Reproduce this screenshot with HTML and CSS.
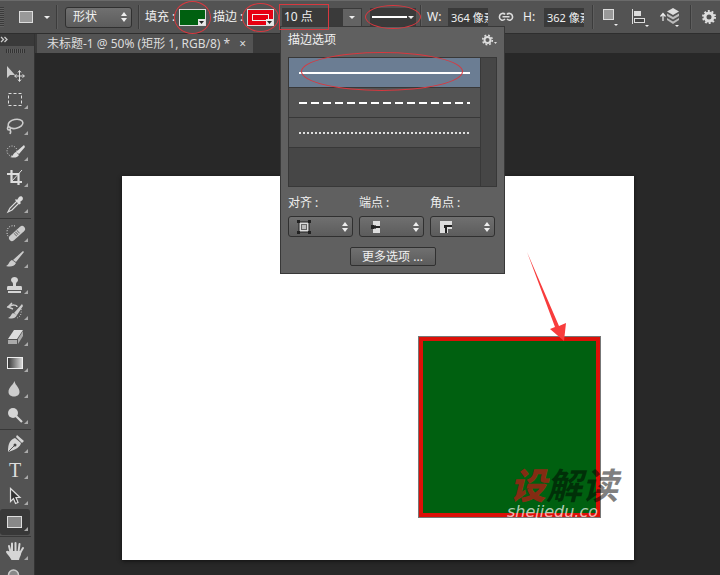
FILE: index.html
```html
<!DOCTYPE html>
<html lang="zh-CN">
    <head>
    <meta charset="utf-8">
    <title>描边选项</title>
    <link rel="stylesheet" href="styles.css">
    </head>

    <body>
        <!-- 顶部选项栏 -->
        <div class="options">
            <span class="grip"></span>
            <button class="preset" aria-label="矩形工具">
                <svg width="32" height="16" viewBox="0 0 32 16"><rect x="1.5" y="2.5" width="13" height="11" fill="#999" stroke="#ddd"/><path d="M26 7h6l-3 3z" fill="#eee"/></svg>
            </button>
            <span class="line"></span>
            <div class="select mode">
                <select aria-label="工具模式"><option>形状</option><option>路径</option><option>像素</option></select>
                <svg width="6" height="10" viewBox="0 0 6 10"><path d="M0 4l3-4 3 4zM0 6h6l-3 4z"/></svg>
            </div>
            <span class="line"></span>
            <label class="name" for="fill">填充 :</label>
            <button class="swatch green" id="fill">
                <svg width="7" height="6" viewBox="0 0 7 6"><path d="M0 0h7v6H0z" fill="#e8e8e8"/><path d="M1 2h5L3.500 5z" fill="#222"/></svg>
                <i class="ring ring-fill"></i>
            </button>
            <label class="name" for="stroke">描边 :</label>
            <button class="swatch red" id="stroke">
                <span class="inner"></span>
                <svg width="7" height="6" viewBox="0 0 7 6"><path d="M0 0h7v6H0z" fill="#e8e8e8"/><path d="M1 2h5L3.500 5z" fill="#222"/></svg>
                <i class="ring ring-stroke"></i>
            </button>
            <div class="size">
                <input type="text" value="10 点" aria-label="描边宽度">
                <button aria-label="选择宽度"><svg width="6" height="3" viewBox="0 0 6 3"><path d="M0 0h6L3 3z" fill="#eee"/></svg></button>
                <i class="ring box"></i>
            </div>
            <button class="type" aria-label="描边类型">
                <svg width="46" height="18" viewBox="0 0 46 18"><path d="M2 8h35v2H2z" fill="#fff"/><path d="M38 8h6l-3 3z" fill="#eee"/></svg>
                <i class="ring ring-type"></i>
            </button>
            <span class="line"></span>
            <label class="axis" for="w">W:</label>
            <input class="num" id="w" type="text" value="364 像素">
            <button class="link" aria-label="链接宽高">
                <svg width="16" height="10" viewBox="0 0 16 10" fill="none" stroke="#ddd" stroke-width="1.600"><path d="M7 2.500C6 1 2 .5 1.500 4.500S5 9 7 7M9 2.500c1-1.500 5-2 5.500 2S11 9 9 7M4.500 4.800h7"/></svg>
            </button>
            <label class="axis" for="h">H:</label>
            <input class="num" id="h" type="text" value="362 像素">
            <span class="line far"></span>
            <div class="actions">
                <button aria-label="路径操作"><svg width="20" height="22" viewBox="0 0 20 22"><rect x="1.500" y="3.500" width="10" height="10" fill="#999" stroke="#ddd"/><path d="M12 18h4l-2 2z" fill="#eee"/></svg></button>
                <button aria-label="对齐方式"><svg width="20" height="22" viewBox="0 0 20 22"><path d="M1 3h1v15H1zM3 5h7v5H3z" fill="#ddd"/><rect x="3.500" y="12.500" width="10" height="4" fill="#444" stroke="#ddd"/><path d="M14 19h4l-2 2z" fill="#eee"/></svg></button>
                <button aria-label="排列方式"><svg width="20" height="22" viewBox="0 0 20 22"><path d="M3 15V8M.500 10.500L3 7.500l2.500 3" fill="none" stroke="#eee" stroke-width="1.200"/><path d="M13 2l6 3.500L13 9 7 5.500z" fill="#ddd"/><path d="M7 7.500l6 3.500 6-3.500v2.500l-6 3.500L7 10zM7 12l6 3.500 6-3.500v2l-6 4-6-4z" fill="#bbb"/><path d="M15 19h4l-2 2z" fill="#eee"/></svg></button>
            </div>
            <span class="line"></span>
            <button class="setting" aria-label="设置"><svg width="14" height="14" viewBox="0 0 14 14"><circle cx="7" cy="7" r="4" fill="none" stroke="#ddd" stroke-width="3"/><circle cx="7" cy="7" r="6" fill="none" stroke="#ddd" stroke-width="2" stroke-dasharray="1.900 1.870"/></svg></button>
        </div>

        <div class="main">
            <!-- 左侧工具栏 -->
            <div class="tools">
                <div class="fold"><svg width="9" height="7" viewBox="0 0 9 7"><path d="M1 1l2.500 2.500L1 6M4.500 1L7 3.500 4.500 6" fill="none" stroke="#ccc" stroke-width="1.300"/></svg></div>
                <div class="handle"><span></span></div>
                <button aria-label="移动"><svg viewBox="0 0 30 26"><path d="M7 5v12l3-3h5z" fill="#ccc"/><path d="M19.500 10v10M15 15h9M18 11.500l1.500-2 1.500 2M18 18.500l1.500 2 1.500-2M16.500 13.500l-2 1.500 2 1.500M22.500 13.500l2 1.500-2 1.500" fill="none" stroke="#ddd"/></svg></button>
                <button class="more" aria-label="选框"><svg viewBox="0 0 30 26"><rect x="8.500" y="6.500" width="13" height="12" fill="none" stroke="#ddd" stroke-dasharray="3 2"/></svg></button>
                <button class="more" aria-label="套索"><svg viewBox="0 0 30 26"><g fill="none" stroke="#ccc" stroke-width="1.600"><ellipse cx="15.500" cy="11" rx="7.500" ry="4.500" transform="rotate(-12 15 11)"/><path d="M9 13c-2 1-2 4 0 4s2-3 0-3M10 17c1 1 1 2 0 4"/></g></svg></button>
                <button class="more" aria-label="快速选择"><svg viewBox="0 0 30 26"><circle cx="12" cy="12" r="5" fill="none" stroke="#ddd" stroke-dasharray="1 1.500"/><path d="M24 6l1 2-6 7-3-2zM16 13l3 3c-2 3-5 3-9 2 3 0 3-4 6-5z" fill="#ddd"/></svg></button>
                <button class="more" aria-label="裁剪"><svg viewBox="0 0 30 26"><path d="M11.500 5v12H22M7 9h11.500v11" fill="none" stroke="#ddd" stroke-width="2.200"/><path d="M12 16L22 5" stroke="#ddd"/></svg></button>
                <button class="more" aria-label="吸管"><svg viewBox="0 0 30 26"><path d="M17 10l2 2-7 7-4 2 2-4z" fill="#555" stroke="#ddd" stroke-width="1.200"/><path d="M15 9l1-1 1 1 2-3c2-2 5 0 3.500 3L20 11l1 1-1.500 1.500z" fill="#ddd"/></svg></button>
                <hr>
                <button class="more" aria-label="修复画笔"><svg viewBox="0 0 30 26"><path d="M15 6c-4-1-8 1-8 6 0 3 1 5 3 6" fill="none" stroke="#ddd" stroke-dasharray="1 1.500"/><path d="M12 18L22 9" stroke="#ccc" stroke-width="6" stroke-linecap="round"/><path d="M15 15l4-4" stroke="#777" stroke-width="4" stroke-dasharray="1 1"/></svg></button>
                <button class="more" aria-label="画笔"><svg viewBox="0 0 30 26"><path d="M23 5l1 1-8 10-3-2zM12 14l4 3c-2 4-6 4-10 3 3-1 3-5 6-6z" fill="#ccc"/></svg></button>
                <button class="more" aria-label="图章"><svg viewBox="0 0 30 26"><path d="M13 12c0-2-2-2-2-4 0-4 7-4 7 0 0 2-2 2-2 4v2h5c1 0 1 1 1 4H7c0-3 0-4 1-4h5zM8 19h13v2H8z" fill="#d5d5d5"/></svg></button>
                <button class="more" aria-label="历史画笔"><svg viewBox="0 0 30 26"><path d="M9 9c3-3 8-2 8 0M12 5L8 9l5 2M9 9H7" fill="none" stroke="#ccc" stroke-width="1.500"/><path d="M22 6l1 2-6 9-3-2zM13 15l4 2c-2 4-5 4-9 3 3-1 3-4 5-5z" fill="#ccc"/><path d="M21 11c1 5-1 8-4 9" fill="none" stroke="#ccc" stroke-dasharray="1 1.500"/></svg></button>
                <button class="more" aria-label="橡皮擦"><svg viewBox="0 0 30 26"><path d="M14 6h9l-6 9H8z" fill="#ddd"/><path d="M8 16h9v4H8zM18 15l5-8v5l-5 8z" fill="#aaa"/></svg></button>
                <button class="more" aria-label="渐变"><svg viewBox="0 0 30 26"><defs><linearGradient id="g"><stop stop-color="#333"/><stop offset="1" stop-color="#ddd"/></linearGradient></defs><rect x="7.500" y="7.500" width="15" height="11" fill="url(#g)" stroke="#eee"/></svg></button>
                <button class="more" aria-label="模糊"><svg viewBox="0 0 30 26"><path d="M14.500 5c1 5 5 6 5 11 0 6-11 6-11 0 0-5 4-6 6-11z" fill="#ccc"/></svg></button>
                <button class="more" aria-label="减淡"><svg viewBox="0 0 30 26"><circle cx="13" cy="11" r="5" fill="#d5d5d5"/><path d="M16 14l6 6" stroke="#d5d5d5" stroke-width="2.200"/></svg></button>
                <hr>
                <button class="more" aria-label="钢笔"><svg viewBox="0 0 30 26"><path d="M17 4l7 6-2 2-6-6zM15 7l6 5c-1 4-4 6-13 9 0-9 2-12 7-14z" fill="#d5d5d5"/><path d="M8.500 20.500l6-6" stroke="#555"/><circle cx="15" cy="14" r="1.500" fill="#444"/></svg></button>
                <button class="more type-tool" aria-label="文字">T</button>
                <button class="more" aria-label="路径选择"><svg viewBox="0 0 30 26"><path d="M10.500 5.500v13l3-3 2 5 2.500-1-2-5h4z" fill="#333" stroke="#ddd" stroke-width="1.200"/></svg></button>
                <button class="more on" aria-label="矩形"><svg viewBox="0 0 30 26"><rect x="7.500" y="7.500" width="14" height="11" fill="#888" stroke="#ddd"/></svg></button>
                <hr>
                <button class="more" aria-label="抓手"><svg viewBox="0 0 30 26"><path d="M12 21c-1-3-5-6-5-7 1-1 2 0 4 2L9 8M12 14L12 5.500M15.500 14V5M18.500 14l1-8M20 15l3-5" fill="none" stroke="#d5d5d5" stroke-width="2" stroke-linecap="round"/><path d="M10 13h11c1 3-1 5-2 9h-7l-3-5z" fill="#d5d5d5"/></svg></button>
                <button class="more" aria-label="缩放"><svg viewBox="0 0 30 26"><circle cx="13.500" cy="11" r="5" fill="#888" stroke="#ccc" stroke-width="1.500"/><path d="M17 15l5 5" stroke="#ccc" stroke-width="2"/></svg></button>
            </div>

            <!-- 文档窗口 -->
            <div class="doc">
                <div class="tabs">
                    <div class="tab"><span>未标题-1 @ 50% (矩形 1, RGB/8) *</span><button aria-label="关闭">×</button></div>
                </div>
                <div class="stage">
                    <div class="paper">
                        <div class="shape"></div>
                        <div class="mark"><p class="cn"><b>设</b>解读</p><p class="en">shejiedu.co</p></div>
                        <svg class="arrow" width="42" height="90" viewBox="0 0 42 90"><path d="M1 0L33 74l7-3-2 18-14-12 5-2z" fill="#f83c3c"/></svg>
                    </div>
                </div>
            </div>
        </div>

        <!-- 描边选项面板 -->
        <div class="panel">
            <div class="head">
                <h1>描边选项</h1>
                <button aria-label="面板菜单"><svg width="15" height="12" viewBox="0 0 15 12"><circle cx="5.500" cy="6" r="3" fill="none" stroke="#ddd" stroke-width="2"/><circle cx="5.500" cy="6" r="4.800" fill="none" stroke="#ddd" stroke-width="1.600" stroke-dasharray="1.900 1.870"/><path d="M12 8h3l-1.500 2z" fill="#ddd"/></svg></button>
            </div>
            <div class="list">
                <div class="rows">
                    <button class="row cur" aria-label="实线"><svg width="172" height="4"><path d="M0 2h171" stroke="#fff" stroke-width="2"/></svg><i class="ring ring-row"></i></button>
                    <button class="row" aria-label="虚线"><svg width="172" height="4"><path d="M0 2h171" stroke="#fff" stroke-width="2" stroke-dasharray="8 4"/></svg></button>
                    <button class="row" aria-label="点线"><svg width="172" height="4"><path d="M0 2h170" stroke="#ddd" stroke-width="2" stroke-dasharray="2 2"/></svg></button>
                </div>
                <div class="scroll"></div>
            </div>
            <div class="fields">
                <div>
                    <label for="align">对齐 :</label>
                    <div class="select">
                        <select id="align"><option></option></select>
                        <svg class="pic" width="14" height="14" viewBox="0 0 14 14"><path d="M3 3h8v8H3z" fill="none" stroke="#ddd" stroke-width="2"/><path d="M2 2h10v10H2z" fill="none" stroke="#222"/><path d="M5 5h4v4H5z" fill="#bbb"/><path d="M0 0h3v3H0zM11 0h3v3h-3zM0 11h3v3H0zM11 11h3v3h-3z" fill="#222"/></svg>
                        <svg width="6" height="10" viewBox="0 0 6 10"><path d="M0 4l3-4 3 4zM0 6h6l-3 4z"/></svg>
                    </div>
                </div>
                <div>
                    <label for="cap">端点 :</label>
                    <div class="select">
                        <select id="cap"><option></option></select>
                        <svg class="pic" width="14" height="14" viewBox="0 0 14 14"><path d="M5 1h7v12H5V9h3V5H5z" fill="#ddd"/><path d="M3 5h3v1h6v2H6v1H3z" fill="#222"/></svg>
                        <svg width="6" height="10" viewBox="0 0 6 10"><path d="M0 4l3-4 3 4zM0 6h6l-3 4z"/></svg>
                    </div>
                </div>
                <div>
                    <label for="corner">角点 :</label>
                    <div class="select">
                        <select id="corner"><option></option></select>
                        <svg class="pic" width="14" height="14" viewBox="0 0 14 14"><path d="M1 1h12v8H9v4H1z" fill="#ddd"/><path d="M5 5h8v2H8v6H6V8H5z" fill="#222"/></svg>
                        <svg width="6" height="10" viewBox="0 0 6 10"><path d="M0 4l3-4 3 4zM0 6h6l-3 4z"/></svg>
                    </div>
                </div>
            </div>
            <button class="extra">更多选项 ...</button>
        </div>
    </body>
</html>
```
FILE: styles.css
```css
*{
    padding:0;
    margin:0;
    box-sizing:border-box;
}

body{
    height:100vh;
    display:flex;
    flex-direction:column;
    overflow:hidden;
    position:relative;
    background-color:#282828;
    color:#f0f0f0;
    font:12px/16px "Noto Sans","Noto Sans CJK SC",sans-serif;
}

button,input,select{
    font:inherit;
    color:inherit;
    border:0;
    background:none;
    appearance:none;
}

svg{
    display:block;
    flex:none;
}

/*顶部选项栏*/
.options{
    height:34px;
    flex:none;
    display:flex;
    align-items:center;
    background-color:#535353;
    border-top:1px solid #6a6a6a;
    border-bottom:1px solid #2e2e2e;
    white-space:nowrap;
}

.options>*{
    flex:none;
}

.grip{
    width:4px;
    height:20px;
    background:repeating-linear-gradient(#3a3a3a 0 1px,#606060 1px 2px);
}

.preset{
    margin:0 6px 0 14px;
}

.line{
    width:2px;
    height:24px;
    border-left:1px solid #3c3c3c;
    border-right:1px solid #5e5e5e;
}

/*下拉框*/
.select{
    height:21px;
    position:relative;
    display:flex;
    align-items:center;
    justify-content:space-between;
    padding:0 4px 0 8px;
    border:1px solid #303030;
    border-radius:3px;
    background:linear-gradient(#707070,#5c5c5c);
}

.select select{
    position:absolute;
    left:0;
    top:0;
    width:100%;
    height:100%;
    padding-left:7px;
}

.select svg{
    fill:#eee;
    margin-left:auto;
    position:relative;
    pointer-events:none;
}

.select .pic{
    margin-left:0;
}

.mode{
    width:67px;
    margin:0 6px 0 7px;
}

.name{
    width:34px;
    margin-left:5px;
}

/*颜色块*/
.swatch{
    width:27px;
    height:17px;
    position:relative;
    border:1px solid #ddd;
}

.swatch svg{
    position:absolute;
    right:0;
    bottom:0;
}

.green{
    background-color:#006010;
    margin-right:2px;
}

.red{
    background-color:#e60012;
}

.inner{
    position:absolute;
    inset:4px;
    border:1px solid #eee;
}

/*红色标注*/
.ring{
    position:absolute;
    border:1px solid #d8383f;
    border-radius:50%;
    pointer-events:none;
    z-index:3;
}

.ring-fill{
    inset:-9px -6px;
}

.ring-stroke{
    inset:-7px -6px;
}

.box{
    left:-3px;
    top:-4px;
    width:50px;
    height:26px;
    border-radius:0;
}

.ring-type{
    inset:-3px -5px;
}

.ring-row{
    left:12px;
    right:17px;
    top:-6px;
    bottom:-4px;
}

.size{
    display:flex;
    position:relative;
    margin-left:8px;
    height:19px;
}

.size input{
    width:60px;
    padding-left:2px;
    background-color:#3a3a3a;
}

.size button{
    width:20px;
    display:flex;
    align-items:center;
    justify-content:center;
    border:1px solid #3a3a3a;
    background-color:#636363;
}

.type{
    position:relative;
    margin:0 4px 0 8px;
    background-color:#3a3a3a;
}

.axis{
    width:21px;
    margin-left:5px;
}

.num{
    width:40px;
    height:19px;
    padding-left:3px;
    background-color:#3a3a3a;
    font-size:11px;
}

.link{
    margin:0 4px 0 10px;
}

.far{
    margin-left:8px;
}

.actions{
    display:flex;
    gap:9px;
    margin:0 10px 0 8px;
}

.setting{
    margin-left:10px;
}

.main{
    flex:1;
    min-height:0;
    display:flex;
}

/*左侧工具栏*/
.tools{
    width:35px;
    flex:none;
    overflow:hidden;
    display:flex;
    flex-direction:column;
    background-color:#535353;
    border-right:1px solid #333;
}

.fold{
    height:12px;
    flex:none;
    padding-top:2px;
    background-color:#3a3a3a;
}

.handle{
    height:15px;
    flex:none;
    padding:3px 0 0 6px;
}

.handle span{
    display:block;
    width:19px;
    height:4px;
    background:repeating-linear-gradient(90deg,#333 0 1px,#606060 1px 2px);
}

.tools button{
    width:30px;
    height:26px;
    flex:none;
    position:relative;
}

.tools button svg{
    width:30px;
    height:26px;
}

.tools .more::after{
    content:"";
    position:absolute;
    right:2px;
    bottom:4px;
    border-left:4px solid transparent;
    border-bottom:4px solid #aaa;
}

.tools hr{
    height:1px;
    flex:none;
    margin:1px 3px 1px 0;
    border:0;
    background-color:#383838;
}

.tools .type-tool{
    font:20px/26px "Liberation Serif",serif;
    color:#ddd;
}

.tools .on{
    background-color:#383838;
    border-radius:3px;
}

/*文档窗口*/
.doc{
    flex:1;
    min-width:0;
    display:flex;
    flex-direction:column;
}

.tabs{
    height:19px;
    flex:none;
    padding-left:2px;
    display:flex;
    background-color:#3a3a3a;
}

.tab{
    display:flex;
    align-items:center;
    gap:9px;
    padding:0 7px 0 10px;
    background-color:#535353;
    color:#ddd;
}

.stage{
    flex:1;
    display:flex;
    padding:123px 86px 15px 87px;
}

.paper{
    flex:1;
    position:relative;
    background-color:#fff;
    box-shadow:0 1px 4px #111;
}

.shape{
    position:absolute;
    right:33px;
    bottom:42px;
    width:183px;
    height:182px;
    border:5px solid #dc1008;
    outline:1px solid #777;
    outline-offset:-1px;
    background-color:#006010;
}

.mark{
    position:absolute;
    right:16px;
    bottom:40px;
}

.cn{
    padding-left:3px;
    font:italic bold 36px/34px "Liberation Sans","Noto Sans CJK SC",sans-serif;
    color:rgba(0,0,0,.5);
}

.cn b{
    color:rgba(170,30,20,.8);
}

.en{
    font:italic 16px/16px "DejaVu Sans",sans-serif;
    color:rgba(255,255,255,.7);
}

.arrow{
    position:absolute;
    right:66px;
    top:76px;
}

/*描边选项面板*/
.panel{
    position:absolute;
    left:280px;
    top:26px;
    width:225px;
    padding:5px 7px 7px;
    border:1px solid #383838;
    background-color:#606060;
}

.head{
    display:flex;
    justify-content:space-between;
    align-items:center;
    height:25px;
    padding-bottom:9px;
}

.head h1{
    font-size:12px;
    font-weight:normal;
}

.list{
    display:flex;
    height:130px;
    border:1px solid #383838;
    background-color:#464646;
}

.rows{
    flex:1;
}

.row{
    width:100%;
    height:30px;
    display:flex;
    align-items:center;
    position:relative;
    padding-left:10px;
    border-bottom:1px solid #383838;
    background-color:#535353;
}

.cur{
    background-color:#6b7d93;
}

.scroll{
    width:16px;
    border-left:1px solid #383838;
}

.fields{
    display:flex;
    gap:6px;
    padding-top:8px;
}

.fields>div{
    width:65px;
}

.fields label{
    display:block;
    height:21px;
}

.extra{
    display:block;
    width:86px;
    height:19px;
    margin:10px auto 0;
    border:1px solid #303030;
    border-radius:2px;
    background:linear-gradient(#707070,#5c5c5c);
}
```
